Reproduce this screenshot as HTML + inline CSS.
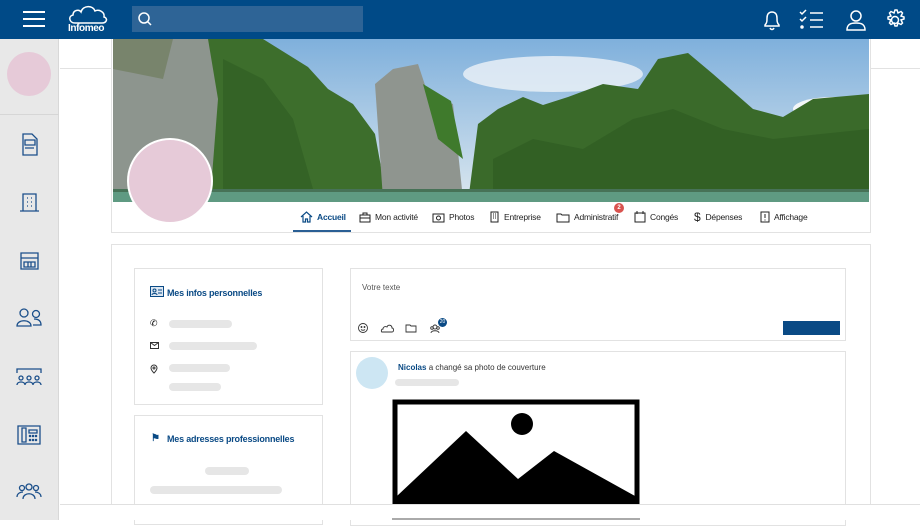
<!DOCTYPE html>
<html><head><meta charset="utf-8"><style>
*{box-sizing:border-box;margin:0;padding:0}
body{width:920px;height:520px;overflow:hidden;background:#fff;font-family:"Liberation Sans",sans-serif;position:relative}
.abs{position:absolute}
.hdr{left:0;top:0;width:920px;height:39px;background:#004a87}
.side{left:0;top:39px;width:59px;height:481px;background:#e8e8e8;border-right:1px solid #d8d8d8}
.card{border:1px solid #e2e2e2;background:#fff}
.bar{background:#e6e6e6;border-radius:5px;height:8px}
.nav{font-size:8.5px;color:#222;top:207px;height:20px;display:flex;align-items:center;letter-spacing:-0.2px}
.nav svg{margin-right:4px}
.t{color:#0a4a85;font-weight:bold;font-size:9px;letter-spacing:-0.2px}
</style></head><body>
<div class="abs hdr"></div>
<svg class="abs" style="left:22px;top:10px" width="24" height="18"><g stroke="#fff" stroke-width="2"><line x1="1" y1="2" x2="23" y2="2"/><line x1="1" y1="9" x2="23" y2="9"/><line x1="1" y1="16" x2="23" y2="16"/></g></svg>
<svg class="abs" style="left:67px;top:3px" width="42" height="22"><path d="M8 20 C2 20 1 13 6 12 C6 7 12 6 14 9 C16 2 26 2 28 8 C32 6 38 9 37 14 C41 15 40 20 35 20 Z" fill="none" stroke="#fff" stroke-width="1.5"/></svg>
<div class="abs" style="left:68px;top:23px;color:#fff;font-size:10px;font-weight:bold;letter-spacing:-0.4px">Infomeo</div>
<div class="abs" style="left:132px;top:6px;width:231px;height:26px;background:#2e6496"></div>
<svg class="abs" style="left:137px;top:11px" width="16" height="16"><circle cx="7" cy="7" r="5" stroke="#fff" stroke-width="1.5" fill="none"/><line x1="10.5" y1="10.5" x2="14" y2="14" stroke="#fff" stroke-width="1.5"/></svg>
<svg class="abs" style="left:760px;top:8px" width="150" height="24" fill="none" stroke="#fff" stroke-width="1.5">
<path d="M5 18 L5 17 C7 15 7 13 7 10 C7 6 9 4 12 4 C15 4 17 6 17 10 C17 13 17 15 19 17 L19 18 Z M10 20 C11 22 13 22 14 20"/>
<path d="M40 4 l2 2 l4 -4 M40 11 l2 2 l4 -4 M50 5 h13 M50 12 h13 M50 19 h13"/><circle cx="42" cy="19" r="1" fill="#fff"/>
<circle cx="96" cy="8" r="5"/><path d="M87 22 C87 16 91 15 96 15 C101 15 105 16 105 22 Z"/>
<circle cx="135" cy="12" r="3.5"/><path d="M135 2 l2 0 l1 3 l3 -1.5 l1.5 1.5 l-1.5 3 l3 1 l0 2 l-3 1 l1.5 3 l-1.5 1.5 l-3 -1.5 l-1 3 l-2 0 l-1 -3 l-3 1.5 l-1.5 -1.5 l1.5 -3 l-3 -1 l0 -2 l3 -1 l-1.5 -3 l1.5 -1.5 l3 1.5 z"/>
</svg>
<div class="abs side"></div>
<div class="abs" style="left:7px;top:52px;width:44px;height:44px;border-radius:50%;background:#e6cad8"></div>
<div class="abs" style="left:0;top:114px;width:59px;height:1px;background:#d6d6d6"></div>
<svg class="abs" style="left:14px;top:130px" width="32" height="375" fill="none" stroke="#1b4f8a" stroke-width="1.3">
<path d="M9 4 h9 l5 5 v16 h-14 z M11 10 h10 v5 h-10 z M11 18 h9"/>
<path d="M9 64 h13 v17 h-13 z M6 81 h19 M13 68 h1 M17 68 h1 M13 72 h1 M17 72 h1 M13 76 h1 M17 76 h1"/>
<path d="M7 123 h17 v16 h-17 z M7 128 h17 M10 132 h11 v5 h-11 z M14 132 v5 M17 132 v5"/>
<circle cx="10" cy="183" r="4"/><path d="M3 196 c0-7 14-7 14 0 z"/><circle cx="22" cy="184" r="3.5"/><path d="M19 195 h8 c0-5-4-6-7-6"/>
<path d="M3 243 v-4 h24 v4"/><circle cx="7" cy="248" r="2"/><circle cx="15" cy="248" r="2"/><circle cx="23" cy="248" r="2"/><path d="M3 255 c0-4 8-4 8 0 M11 255 c0-4 8-4 8 0 M19 255 c0-4 8-4 8 0"/>
<path d="M4 296 h22 v18 h-22 z M8 298 h4 v14 h-4 z M15 300 h8 v3 h-8 z"/><circle cx="16" cy="306" r=".6"/><circle cx="19" cy="306" r=".6"/><circle cx="22" cy="306" r=".6"/><circle cx="16" cy="310" r=".6"/><circle cx="19" cy="310" r=".6"/><circle cx="22" cy="310" r=".6"/>
<circle cx="8" cy="358" r="2.5"/><circle cx="15" cy="357" r="3"/><circle cx="22" cy="358" r="2.5"/><path d="M3 367 c0-4 4-5 6-5 M27 367 c0-4-4-5-6-5 M9 369 c0-7 12-7 12 0"/>
</svg>
<div class="abs" style="left:60px;top:68px;width:860px;height:1px;background:#e2e2e2"></div>
<div class="abs card" style="left:111px;top:39px;width:760px;height:194px;border-top:none"></div>
<svg class="abs" style="left:113px;top:39px" width="756" height="163" viewBox="0 0 756 163" preserveAspectRatio="none">
<defs><linearGradient id="s" x1="0" y1="0" x2="0" y2="1"><stop offset="0" stop-color="#7fb0dc"/><stop offset="1" stop-color="#dbe7ef"/></linearGradient></defs>
<rect width="756" height="163" fill="url(#s)"/>
<ellipse cx="440" cy="35" rx="90" ry="18" fill="#eef3f7" opacity=".8"/><ellipse cx="720" cy="70" rx="40" ry="12" fill="#f3f6f8"/>
<path d="M355 163 L365 85 L385 70 L410 58 L430 66 L455 58 L490 45 L525 50 L545 20 L575 14 L600 35 L640 70 L670 78 L700 60 L756 55 L756 163 Z" fill="#3a6a2a"/>
<path d="M380 120 L420 100 L470 110 L520 80 L560 70 L610 90 L660 100 L756 90 L756 150 L380 150Z" fill="#2d5a22" opacity=".6"/>
<path d="M0 163 L0 0 L150 0 L195 28 L215 50 L240 65 L262 95 L272 150 Z" fill="#3d6e2c"/>
<path d="M110 20 L150 40 L180 80 L200 150 L110 150Z" fill="#2c5820" opacity=".5"/>
<path d="M0 0 L95 0 L105 60 L98 150 L0 150 Z" fill="#8d958e"/>
<path d="M0 0 L60 0 L50 40 L0 30Z" fill="#6a7a55" opacity=".6"/>
<path d="M270 160 L262 45 L280 30 L305 25 L315 55 L340 65 L350 160 Z" fill="#8f958f"/>
<path d="M310 45 L338 62 L350 120 L325 100 Z" fill="#3f7a2c"/>
<rect y="150" width="756" height="13" fill="#5f9a82"/>
<rect x="0" y="150" width="756" height="3" fill="#2f4a2c" opacity=".5"/>
</svg>
<div class="abs" style="left:127px;top:138px;width:86px;height:86px;border-radius:50%;background:#e6cad8;border:2px solid #fff"></div>
<div class="abs" style="left:293px;top:230px;width:58px;height:2px;background:#2a5f94"></div>
<div class="abs nav" style="left:300px"><svg width="13" height="12" fill="none" stroke="#0a4a85" stroke-width="1.2"><path d="M1 6 L6.5 1 L12 6 M3 5 V11 H5.5 V8 H7.5 V11 H10 V5"/></svg><span class="t" style="font-size:8.5px">Accueil</span></div>
<div class="abs nav" style="left:359px"><svg width="12" height="11" fill="none" stroke="#222"><rect x="1" y="3" width="10" height="7"/><path d="M4 3V1h4v2M1 6h10"/></svg>Mon activité</div>
<div class="abs nav" style="left:432px"><svg width="13" height="11" fill="none" stroke="#222"><rect x="1" y="2" width="11" height="8"/><circle cx="6.5" cy="6" r="2"/></svg>Photos</div>
<div class="abs nav" style="left:489px"><svg width="11" height="12" fill="none" stroke="#222"><rect x="2" y="1" width="7" height="10"/><path d="M4 3h1M6 3h1M4 5h1M6 5h1M4 7h1M6 7h1"/></svg>Entreprise</div>
<div class="abs nav" style="left:556px"><svg width="14" height="11" fill="none" stroke="#222"><path d="M1 2h4l1 1h7v7H1z"/></svg>Administratif</div>
<div class="abs" style="left:614px;top:203px;width:10px;height:10px;border-radius:50%;background:#d9534f;color:#fff;font-size:6px;text-align:center;line-height:10px;font-weight:bold">2</div>
<div class="abs nav" style="left:634px"><svg width="12" height="12" fill="none" stroke="#222"><rect x="1" y="2" width="10" height="9"/><path d="M3 0v3M9 0v3"/></svg>Congés</div>
<div class="abs nav" style="left:694px"><span style="font-size:12px;margin-right:5px">$</span>Dépenses</div>
<div class="abs nav" style="left:760px"><svg width="10" height="12" fill="none" stroke="#222"><rect x="1" y="1" width="8" height="10"/><path d="M5 3v4M5 8.5v1"/></svg>Affichage</div>
<div class="abs card" style="left:111px;top:244px;width:760px;height:276px"></div>
<div class="abs card" style="left:134px;top:268px;width:189px;height:137px"></div>
<svg class="abs" style="left:150px;top:286px" width="14" height="12" fill="none" stroke="#0a4a85"><rect x=".5" y=".5" width="13" height="10" fill="#dce7f2"/><circle cx="4.5" cy="4.5" r="1.5"/><path d="M2 9c0-2 5-2 5 0M8 4h4M8 7h4"/></svg>
<div class="abs t" style="left:167px;top:288px">Mes infos personnelles</div>
<div class="abs" style="left:150px;top:318px;font-size:9px">✆</div>
<div class="abs bar" style="left:169px;top:320px;width:63px"></div>
<svg class="abs" style="left:150px;top:342px" width="9" height="7" fill="none" stroke="#333"><rect x=".5" y=".5" width="8" height="6"/><path d="M.5 .5l4 3 4-3"/></svg>
<div class="abs bar" style="left:169px;top:342px;width:88px"></div>
<svg class="abs" style="left:150px;top:364px" width="8" height="10" fill="none" stroke="#333"><path d="M4 9C1 6 1 5 1 4a3 3 0 016 0c0 1 0 2-3 5z"/><circle cx="4" cy="4" r="1"/></svg>
<div class="abs bar" style="left:169px;top:364px;width:61px"></div>
<div class="abs bar" style="left:169px;top:383px;width:52px"></div>
<div class="abs card" style="left:134px;top:415px;width:189px;height:110px"></div>
<div class="abs" style="left:151px;top:433px;color:#0a4a85;font-size:10px;font-weight:bold">⚑</div>
<div class="abs t" style="left:167px;top:434px">Mes adresses professionnelles</div>
<div class="abs bar" style="left:205px;top:467px;width:44px"></div>
<div class="abs bar" style="left:150px;top:486px;width:132px"></div>
<div class="abs card" style="left:350px;top:268px;width:496px;height:73px"></div>
<div class="abs" style="left:362px;top:283px;font-size:8px;color:#555">Votre texte</div>
<svg class="abs" style="left:357px;top:319px" width="95" height="16" fill="none" stroke="#333" stroke-width=".9">
<circle cx="6" cy="9" r="4.5"/><circle cx="4.5" cy="8" r=".5"/><circle cx="7.5" cy="8" r=".5"/><path d="M4 10.5c1 1 3 1 4 0"/>
<path d="M25 13h10c2 0 2-4 0-4c0-3-4-4-5-1c-2-1-4 0-4 2c-2 0-2 3-1 3z"/>
<path d="M49 6h4l1 1h5v6h-10z"/>
<circle cx="78" cy="8" r="2"/><path d="M74 14c0-3 8-3 8 0"/><circle cx="75" cy="9" r="1.3"/><circle cx="81" cy="9" r="1.3"/>
</svg>
<div class="abs" style="left:438px;top:318px;width:9px;height:9px;border-radius:50%;background:#0a4a85;color:#fff;font-size:5px;line-height:9px;text-align:center">20</div>
<div class="abs" style="left:783px;top:321px;width:57px;height:14px;background:#0a4a85"></div>
<div class="abs card" style="left:350px;top:351px;width:496px;height:175px"></div>
<div class="abs" style="left:356px;top:357px;width:32px;height:32px;border-radius:50%;background:#cde6f3"></div>
<div class="abs" style="left:398px;top:363px;font-size:8px"><b style="color:#0a4a85">Nicolas</b> <span style="color:#333">a changé sa photo de couverture</span></div>
<div class="abs bar" style="left:395px;top:379px;width:64px;height:7px"></div>
<svg class="abs" style="left:392px;top:399px" width="248" height="106" viewBox="0 0 248 106"><rect x="3" y="3" width="242" height="102" fill="#fff" stroke="#000" stroke-width="5"/><path d="M5 97 L74 32 L126 80 L162 52 L243 97 L243 106 L5 106 Z" fill="#000"/><ellipse cx="130" cy="25" rx="11" ry="11" fill="#000"/></svg>
<div class="abs" style="left:60px;top:504px;width:860px;height:16px;background:#fff;border-top:1px solid #e0e0e0"></div>
<div class="abs" style="left:392px;top:518px;width:248px;height:2px;background:#aaa"></div>
</body></html>
